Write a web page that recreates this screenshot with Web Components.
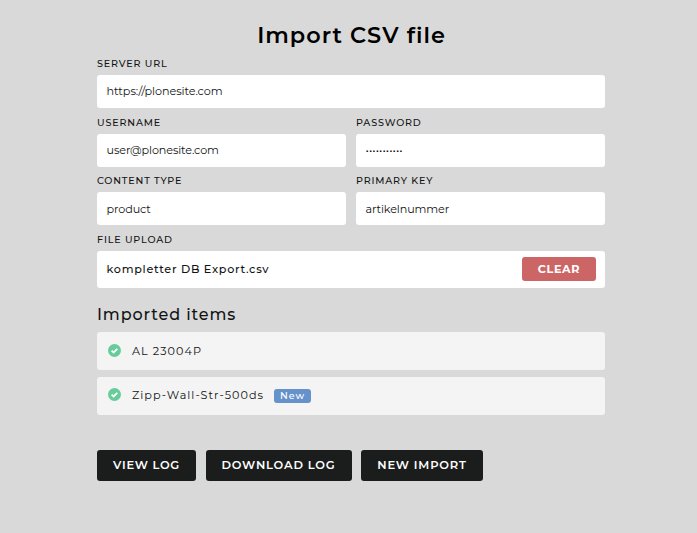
<!DOCTYPE html>
<html lang="en">
<head>
<meta charset="utf-8">
<title>Import CSV file</title>
<style>
body { margin: 0; background: #d9d9d9; color: #111313; font-family: Montserrat, Inter, "Open Sans", sans-serif; }
</style>
</head>
<body>
<import-page>
  <form-field label="Server URL" style="--ls:-.05px">https://plonesite.com</form-field>
  <field-row>
    <form-field label="Username" style="--ls:-.1px">user@plonesite.com</form-field>
    <form-field label="Password" type="password" style="--ls:.08px">•••••••••••</form-field>
  </field-row>
  <field-row class="second">
    <form-field label="Content type" style="--drop:1px;--ls:-.1px">product</form-field>
    <form-field label="Primary key" style="--drop:1px;--ls:-.12px">artikelnummer</form-field>
  </field-row>
  <form-field class="file" label="File upload" type="file" style="--ls:.72px">kompletter DB Export.csv
    <action-button slot="action" variant="danger" style="--ls:.65px;width:74px">Clear</action-button>
  </form-field>
  <imported-items>
    <import-item style="--ls:1.08px">AL 23004P</import-item>
    <import-item class="last" style="--ls:1.04px" badge="New">Zipp-Wall-Str-500ds</import-item>
  </imported-items>
  <button-bar>
    <action-button style="--ls:.72px;width:99px">View log</action-button>
    <action-button style="--ls:.82px;width:146px">Download log</action-button>
    <action-button style="--ls:.82px;width:122px">New import</action-button>
  </button-bar>
</import-page>
<script>
class Base extends HTMLElement {
  constructor() {
    super();
    this.attachShadow({ mode: 'open' }).innerHTML =
      `<style>*{box-sizing:border-box}:host{box-sizing:border-box}</style>` + this.view();
  }
}
customElements.define('import-page', class extends Base {
  view() {
    return `<style>
      :host { display: block; width: 508px; margin-left: 97px; padding-top: 21px; }
      h1 { margin: 0; height: 36px; padding-left: 1px; font-size: 22.4px; line-height: 29px; font-weight: 600; letter-spacing: 1px; text-align: center; color: #000; }
      ::slotted(.second) { margin-top: -1px; }
    </style><h1>Import CSV file</h1><slot></slot>`;
  }
});
customElements.define('field-row', class extends Base {
  view() {
    return `<style>:host { display: grid; grid-template-columns: 1fr 1fr; gap: 10px; }</style><slot></slot>`;
  }
});
customElements.define('form-field', class extends Base {
  view() {
    return `<style>
      :host { display: block; height: 59px; }
      label { display: block; height: 18px; line-height: 13px; font-size: 9.6px; font-weight: 500; letter-spacing: .83px; text-transform: uppercase; }
      .box { display: flex; align-items: center; justify-content: space-between; height: 33px; padding: var(--drop, 0) 9px 1px 9.5px; border-radius: 3px; background: #fff; font-size: 11.2px; line-height: 14px; letter-spacing: var(--ls, 0); white-space: nowrap; }
      :host([type=password]) .box { color: #000; }
      :host([type=file]) .box { height: 37px; font-weight: 500; }
    </style><label>${this.getAttribute('label')}</label><div class="box"><span><slot></slot></span><slot name="action"></slot></div>`;
  }
});
customElements.define('action-button', class extends Base {
  view() {
    return `<style>
      :host { display: block; }
      button { display: block; width: 100%; height: 31px; margin: 0; padding: 0 0 1px 0; border: 0; border-radius: 3px; background: #1b1d1c; color: #fff; font: 600 11.5px/30px Montserrat, Inter, sans-serif; letter-spacing: var(--ls); text-transform: uppercase; white-space: nowrap; }
      :host([variant=danger]) button { height: 24px; padding: 1px 0 0; line-height: 23px; background: #cc6666; font-size: 11.2px; font-weight: 700; }
    </style><button type="button"><slot></slot></button>`;
  }
});
customElements.define('imported-items', class extends Base {
  view() {
    return `<style>
      :host { display: flex; flex-direction: column; gap: 7px; margin-top: -2px; padding-top: 15px; }
      h2 { margin: 0; height: 20px; font-size: 16px; line-height: 20px; font-weight: 500; letter-spacing: .9px; }
    </style><h2>Imported items</h2><slot></slot>`;
  }
});
customElements.define('import-item', class extends Base {
  view() {
    const badge = this.getAttribute('badge');
    return `<style>
      :host { display: flex; align-items: center; height: 38px; padding: 0 11px 1px 10.5px; border-radius: 3px; background: #f4f4f4; font-size: 11.2px; line-height: 14px; letter-spacing: var(--ls); }
      :host(.last) { padding-bottom: 3px; }
      svg { flex: none; width: 13px; height: 13px; margin: 0 11.5px 1px 0; }
      .badge { height: 14px; width: 37px; margin: 3px 0 0 9.5px; padding-left: 1px; border-radius: 3px; background: #6692cc; color: #fff; font-size: 9.6px; line-height: 14px; font-weight: 500; letter-spacing: .96px; text-align: center; }
    </style>
    <svg viewBox="0 0 13 13"><circle cx="6.5" cy="6.5" r="6.5" fill="#66cc99"/><path d="M3.6 6.6 5.6 8.5 9.3 4.8" fill="none" stroke="#fff" stroke-width="1.8"/></svg>
    <span><slot></slot></span>${badge ? `<span class="badge">${badge}</span>` : ''}`;
  }
});
customElements.define('button-bar', class extends Base {
  view() {
    return `<style>:host { display: flex; gap: 9.5px; margin-top: 35px; }</style><slot></slot>`;
  }
});
</script>
</body>
</html>
